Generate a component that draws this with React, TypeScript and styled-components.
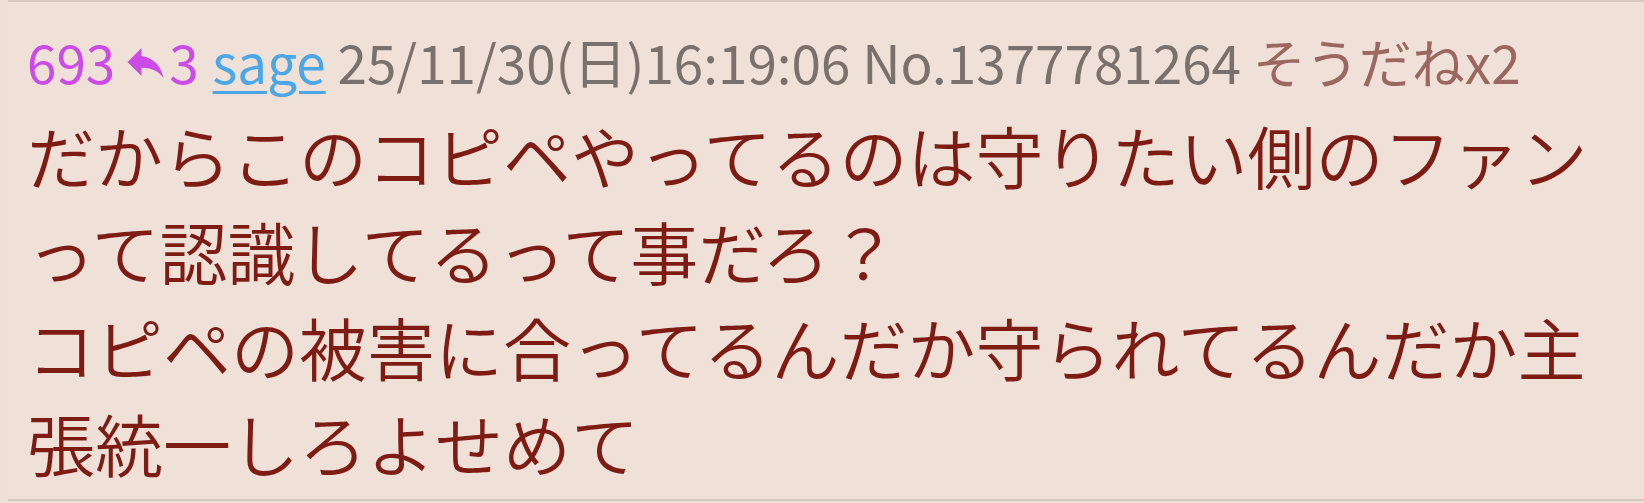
import React from 'react';
import styled, { createGlobalStyle } from 'styled-components';

const GlobalStyle = createGlobalStyle`
  html, body {
    margin: 0;
    padding: 0;
    background: #eee0d7;
  }
  body {
    font-family: "Noto Sans CJK JP", "Noto Sans", sans-serif;
  }
`;

const Post = styled.div`
  margin-left: 8px;
  border-top: 2px solid #d9c8c0;
  border-bottom: 2px solid #d6c5bd;
  background: #efe1d8;
  padding: 22px 20px 0 19px;
  height: 501px;
  box-sizing: border-box;
`;

const Header = styled.div`
  font-size: 53px;
  line-height: 74px;
  white-space: nowrap;
  color: #7b716c;
`;

const ResNumber = styled.span`
  color: #cc4be8;
`;

const ReplyCount = styled.span`
  color: #cc4be8;
  margin-left: 12px;
  margin-right: 2px;

  svg {
    width: 37px;
    height: 30px;
    margin-right: 5px;
    vertical-align: 6px;
  }
`;

const Mail = styled.a`
  color: #4ba7e8;
  text-decoration: underline;
  text-decoration-thickness: 3px;
  text-underline-offset: 7px;
`;

const Soudane = styled.span`
  color: #9b6760;
`;

const Body = styled.div`
  margin-top: 9px;
  font-size: 68px;
  font-weight: 350;
  line-height: 96px;
  color: #7e1c14;
  line-break: anywhere;
  word-break: break-all;
`;

const ReplyIcon = () => (
  <svg viewBox="3 5 18 15" fill="currentColor">
    <path d="M10 9V5l-7 7 7 7v-4.1c5 0 8.5 1.6 11 5.1-1-5-4-10-11-11z" />
  </svg>
);

const App = () => {
  return (
    <>
      <GlobalStyle />
      <Post>
        <Header>
          <ResNumber>693</ResNumber>
          <ReplyCount>
            <ReplyIcon />3
          </ReplyCount>{' '}
          <Mail href="#">sage</Mail> 25/11/30(日)16:19:06 No.1377781264 <Soudane>そうだねx2</Soudane>
        </Header>
        <Body>
          だからこのコピペやってるのは守りたい側のファンって認識してるって事だろ？
          <br />
          コピペの被害に合ってるんだか守られてるんだか主張統一しろよせめて
        </Body>
      </Post>
    </>
  );
};

export default App;
